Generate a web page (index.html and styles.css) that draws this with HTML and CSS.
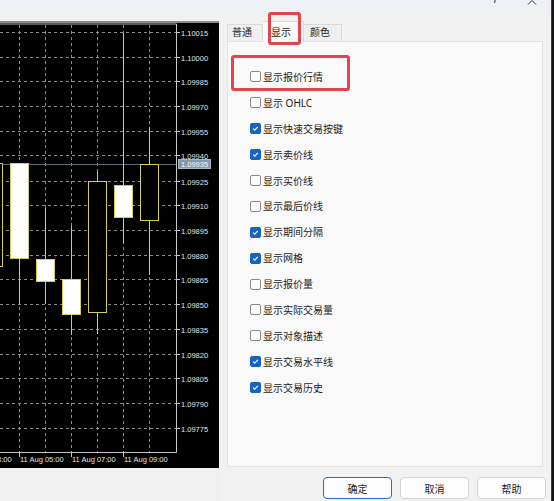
FILE: index.html
```html
<!DOCTYPE html>
<html lang="zh-CN">
<head>
<meta charset="utf-8">
<title>属性</title>
<link rel="stylesheet" href="styles.css">
</head>
<body>
<div class="screen">
  <div class="topbar">
    <svg class="help-ico" width="6" height="5" viewBox="0 0 6 5"><path d="M3.2 0 L2.6 3" stroke="#333" stroke-width="1" fill="none"/></svg>
    <svg class="close-ico" width="10" height="5" viewBox="0 0 10 5"><path d="M1 4.5 L5 0.5 L9 4.5" stroke="#333" stroke-width="1" fill="none"/></svg>
  </div>
  <div class="main">
    <div class="chart-col">
      <svg class="chart" width="219" height="447" viewBox="0 21 219 447">
        <rect x="0" y="21" width="219" height="447" fill="#000"/>
        <line x1="0" y1="22" x2="219" y2="22" stroke="#8a8a8a" stroke-width="2"/>
        <line x1="0" y1="24" x2="176.5" y2="24" stroke="#b8b8b8" stroke-width="1"/>
        <g stroke="#8c8c8c" stroke-width="1" stroke-dasharray="3 3">
          <line x1="19.5" y1="25" x2="19.5" y2="452"/>
          <line x1="45.5" y1="25" x2="45.5" y2="452"/>
          <line x1="71.5" y1="25" x2="71.5" y2="452"/>
          <line x1="97.5" y1="25" x2="97.5" y2="452"/>
          <line x1="123.5" y1="25" x2="123.5" y2="452"/>
          <line x1="149.5" y1="25" x2="149.5" y2="452"/>
          <line x1="0" y1="32.5" x2="176" y2="32.5"/>
          <line x1="0" y1="57.5" x2="176" y2="57.5"/>
          <line x1="0" y1="81.5" x2="176" y2="81.5"/>
          <line x1="0" y1="106.5" x2="176" y2="106.5"/>
          <line x1="0" y1="131.5" x2="176" y2="131.5"/>
          <line x1="0" y1="155.5" x2="176" y2="155.5"/>
          <line x1="0" y1="181.5" x2="176" y2="181.5"/>
          <line x1="0" y1="205.5" x2="176" y2="205.5"/>
          <line x1="0" y1="230.5" x2="176" y2="230.5"/>
          <line x1="0" y1="255.5" x2="176" y2="255.5"/>
          <line x1="0" y1="279.5" x2="176" y2="279.5"/>
          <line x1="0" y1="304.5" x2="176" y2="304.5"/>
          <line x1="0" y1="329.5" x2="176" y2="329.5"/>
          <line x1="0" y1="354.5" x2="176" y2="354.5"/>
          <line x1="0" y1="378.5" x2="176" y2="378.5"/>
          <line x1="0" y1="403.5" x2="176" y2="403.5"/>
          <line x1="0" y1="428.5" x2="176" y2="428.5"/>
        </g>
        <line x1="176.5" y1="24" x2="176.5" y2="452.5" stroke="#c8c8c8"/>
        <line x1="0" y1="452.5" x2="176.5" y2="452.5" stroke="#c8c8c8"/>
        <line x1="0" y1="164.5" x2="176" y2="164.5" stroke="#5d6b7a"/>
        <g stroke="#d6ce58" stroke-width="1">
          <line x1="19.5" y1="258" x2="19.5" y2="304"/>
          <line x1="45.5" y1="208" x2="45.5" y2="304"/>
          <line x1="71.5" y1="226" x2="71.5" y2="335"/>
          <line x1="97.5" y1="171" x2="97.5" y2="334"/>
          <line x1="123.5" y1="33" x2="123.5" y2="243"/>
          <line x1="149.5" y1="127" x2="149.5" y2="275"/>
          <rect x="-15.5" y="163.5" width="18" height="103" fill="#000"/>
          <rect x="10.5" y="163.5" width="18" height="95" fill="#fff"/>
          <rect x="36.5" y="259.5" width="18" height="22" fill="#fff"/>
          <rect x="62.5" y="279.5" width="18" height="35" fill="#fff"/>
          <rect x="88.5" y="181.5" width="18" height="131" fill="#000"/>
          <rect x="114.5" y="185.5" width="18" height="32" fill="#fff"/>
          <rect x="140.5" y="164.5" width="18" height="56" fill="#000"/>
        </g>
        <g stroke="#c8c8c8" stroke-width="1">
          <line x1="176" y1="32.5" x2="180" y2="32.5"/>
          <line x1="176" y1="57.5" x2="180" y2="57.5"/>
          <line x1="176" y1="81.5" x2="180" y2="81.5"/>
          <line x1="176" y1="106.5" x2="180" y2="106.5"/>
          <line x1="176" y1="131.5" x2="180" y2="131.5"/>
          <line x1="176" y1="155.5" x2="180" y2="155.5"/>
          <line x1="176" y1="181.5" x2="180" y2="181.5"/>
          <line x1="176" y1="205.5" x2="180" y2="205.5"/>
          <line x1="176" y1="230.5" x2="180" y2="230.5"/>
          <line x1="176" y1="255.5" x2="180" y2="255.5"/>
          <line x1="176" y1="279.5" x2="180" y2="279.5"/>
          <line x1="176" y1="304.5" x2="180" y2="304.5"/>
          <line x1="176" y1="329.5" x2="180" y2="329.5"/>
          <line x1="176" y1="354.5" x2="180" y2="354.5"/>
          <line x1="176" y1="378.5" x2="180" y2="378.5"/>
          <line x1="176" y1="403.5" x2="180" y2="403.5"/>
          <line x1="176" y1="428.5" x2="180" y2="428.5"/>
          <line x1="19.5" y1="452" x2="19.5" y2="457"/>
          <line x1="71.5" y1="452" x2="71.5" y2="457"/>
          <line x1="123.5" y1="452" x2="123.5" y2="457"/>
        </g>
        <g class="axis-text">
          <text x="181" y="35.5">1.10015</text>
          <text x="181" y="60.5">1.10000</text>
          <text x="181" y="84.5">1.09985</text>
          <text x="181" y="109.5">1.09970</text>
          <text x="181" y="134.5">1.09955</text>
          <text x="181" y="158.5">1.09940</text>
          <text x="181" y="184.5">1.09925</text>
          <text x="181" y="208.5">1.09910</text>
          <text x="181" y="233.5">1.09895</text>
          <text x="181" y="258.5">1.09880</text>
          <text x="181" y="282.5">1.09865</text>
          <text x="181" y="307.5">1.09850</text>
          <text x="181" y="332.5">1.09835</text>
          <text x="181" y="357.5">1.09820</text>
          <text x="181" y="381.5">1.09805</text>
          <text x="181" y="406.5">1.09790</text>
          <text x="181" y="431.5">1.09775</text>
          <text x="-32" y="462">11 Aug 03:00</text>
          <text x="20" y="462">11 Aug 05:00</text>
          <text x="72" y="462">11 Aug 07:00</text>
          <text x="124" y="462">11 Aug 09:00</text>
        </g>
        <rect x="178.5" y="159.5" width="32" height="9" fill="#8597aa" stroke="#a8b6c4"/>
        <text class="axis-text price-now" x="181" y="167">1.09935</text>
      </svg>
    </div>
    <div class="dialog">
      <div class="tabs">
        <div class="tab t1">普通</div>
        <div class="tab t2 active">显示</div>
        <div class="tab t3">颜色</div>
      </div>
      <div class="panel">
        <ul class="opts">
          <li class="opt"><span class="cb"></span><span class="lbl">显示报价行情</span></li>
          <li class="opt"><span class="cb"></span><span class="lbl">显示 OHLC</span></li>
          <li class="opt"><span class="cb on"><svg viewBox="0 0 11 11"><path d="M2.6 5.6 L4.6 7.6 L8.4 3.6"/></svg></span><span class="lbl">显示快速交易按键</span></li>
          <li class="opt"><span class="cb on"><svg viewBox="0 0 11 11"><path d="M2.6 5.6 L4.6 7.6 L8.4 3.6"/></svg></span><span class="lbl">显示卖价线</span></li>
          <li class="opt"><span class="cb"></span><span class="lbl">显示买价线</span></li>
          <li class="opt"><span class="cb"></span><span class="lbl">显示最后价线</span></li>
          <li class="opt"><span class="cb on"><svg viewBox="0 0 11 11"><path d="M2.6 5.6 L4.6 7.6 L8.4 3.6"/></svg></span><span class="lbl">显示期间分隔</span></li>
          <li class="opt"><span class="cb on"><svg viewBox="0 0 11 11"><path d="M2.6 5.6 L4.6 7.6 L8.4 3.6"/></svg></span><span class="lbl">显示网格</span></li>
          <li class="opt"><span class="cb"></span><span class="lbl">显示报价量</span></li>
          <li class="opt"><span class="cb"></span><span class="lbl">显示实际交易量</span></li>
          <li class="opt"><span class="cb"></span><span class="lbl">显示对象描述</span></li>
          <li class="opt"><span class="cb on"><svg viewBox="0 0 11 11"><path d="M2.6 5.6 L4.6 7.6 L8.4 3.6"/></svg></span><span class="lbl">显示交易水平线</span></li>
          <li class="opt"><span class="cb on"><svg viewBox="0 0 11 11"><path d="M2.6 5.6 L4.6 7.6 L8.4 3.6"/></svg></span><span class="lbl">显示交易历史</span></li>
        </ul>
      </div>
      <div class="buttons">
        <button class="btn default">确定</button>
        <button class="btn">取消</button>
        <button class="btn">帮助</button>
      </div>
      <div class="mark mark-tab"></div>
      <div class="mark mark-opt"></div>
    </div>
  </div>
</div>
<div class="edge"></div>
</body>
</html>
```

FILE: styles.css
```css
* { box-sizing: border-box; }
html, body { margin: 0; padding: 0; }
body {
  width: 554px;
  height: 501px;
  overflow: hidden;
  display: flex;
  background: #f0f0f0;
  font-family: "Noto Sans", "Noto Sans CJK SC", sans-serif;
  font-size: 10px;
  color: #1b1b1b;
}
.screen {
  width: 551px;
  height: 501px;
  display: flex;
  flex-direction: column;
}
.edge {
  width: 3px;
  height: 501px;
  background: #141414;
  border-left: 1px solid #3a3a3a;
}
.topbar {
  height: 12px;
  background: #eef2f7;
  display: flex;
  justify-content: flex-end;
  align-items: flex-start;
  padding-right: 14px;
}
.help-ico { margin-right: 29px; margin-top: 0; }
.close-ico { margin-top: 0; }
.main {
  flex: 1;
  display: flex;
}
.chart-col {
  width: 219px;
  padding-top: 9px;
}
.chart { display: block; }
.axis-text {
  font-family: "Liberation Sans", Arial, sans-serif;
  font-size: 7.5px;
  fill: #e4e4e4;
}
.price-now { fill: #f4f7fa; }
.dialog {
  position: relative;
  flex: 1;
  display: flex;
  flex-direction: column;
  padding-left: 8px;
  padding-top: 9px;
  background: #f2f2f2;
}
.tabs {
  height: 20px;
  display: flex;
  align-items: flex-end;
}
.tab {
  height: 17px;
  line-height: 15px;
  border: 1px solid #dadada;
  border-bottom: none;
  background: #efefef;
  color: #1b1b1b;
  white-space: nowrap;
}
.t1 { width: 36px; padding-left: 4px; }
.t2 { width: 41px; padding-left: 8px; }
.t3 { width: 38px; padding-left: 6px; border-left: none; }
.tab.active {
  height: 21px;
  line-height: 21px;
  margin-bottom: -1px;
  background: #f9f9f9;
  border-left: none;
  position: relative;
  z-index: 1;
}
.panel {
  width: 316px;
  height: 426px;
  background: #f9f9f9;
  border: 1px solid #e3e3e3;
  padding: 22px 0 0 22px;
}
.opts {
  list-style: none;
  margin: 0;
  padding: 0;
}
.opt {
  height: 25.9px;
  display: flex;
  align-items: center;
}
.cb {
  width: 11px;
  height: 11px;
  border: 1px solid #8a8a8a;
  border-radius: 2px;
  background: #fbfbfb;
  margin-right: 2px;
  flex: none;
  display: flex;
}
.cb.on {
  background: #1464c0;
  border-color: #1464c0;
}
.cb svg {
  width: 9px;
  height: 9px;
}
.cb svg path {
  fill: none;
  stroke: #fff;
  stroke-width: 1.4;
}
.lbl { line-height: 12px; }
.buttons {
  margin-top: 10px;
  height: 22px;
  display: flex;
  justify-content: flex-end;
  gap: 8px;
  padding-right: 5px;
}
.btn {
  width: 69px;
  height: 22px;
  border: 1px solid #d3d3d3;
  border-radius: 4px;
  background: #fdfdfd;
  font-family: "Noto Sans", "Noto Sans CJK SC", sans-serif;
  font-size: 10px;
  color: #1b1b1b;
  padding: 0;
}
.btn.default {
  border-color: #2a6ec0;
}
.mark {
  position: absolute;
  border: 3px solid #e2454b;
  border-radius: 3px;
  z-index: 2;
}
.mark-tab {
  left: 49px;
  top: 0;
  width: 33px;
  height: 33px;
}
.mark-opt {
  left: 12px;
  top: 43px;
  width: 119px;
  height: 36px;
}
```
